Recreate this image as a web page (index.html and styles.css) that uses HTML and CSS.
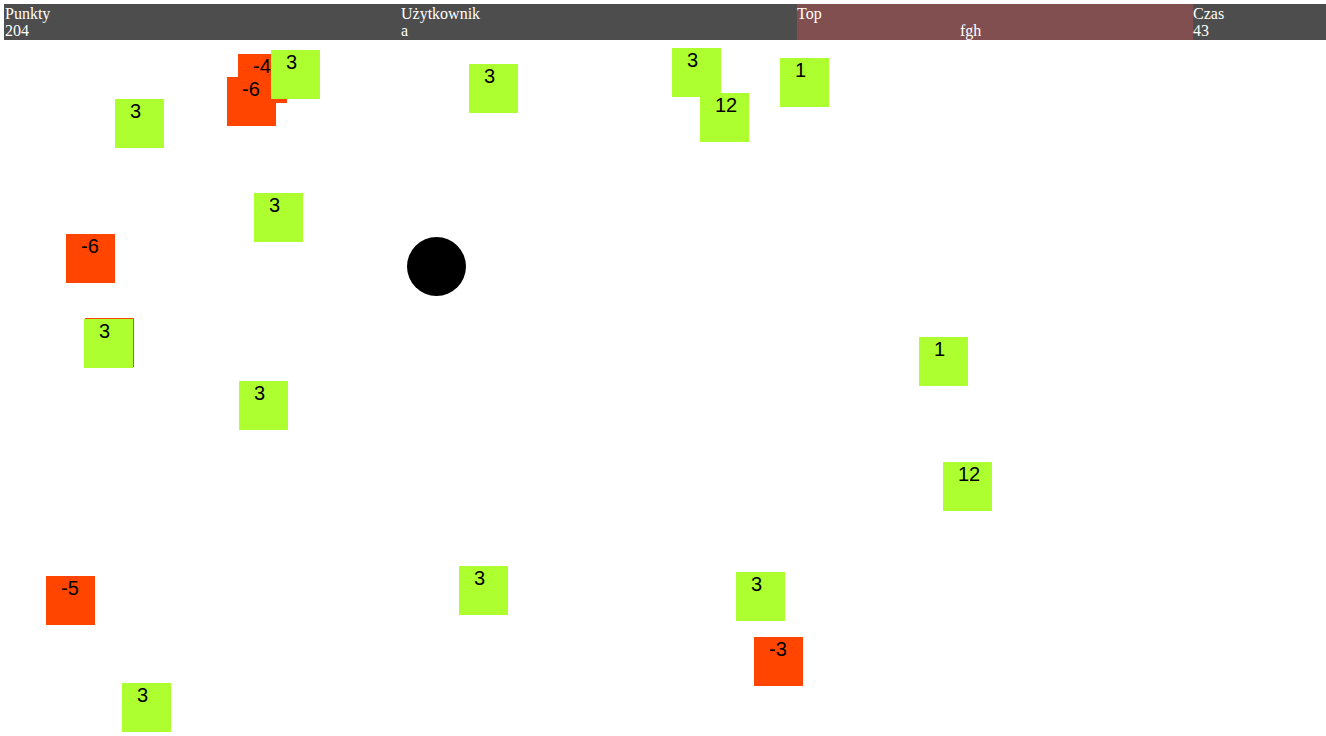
FILE: index.html
```html
<!DOCTYPE html>
<html lang="pl">
<head>
<meta charset="utf-8">
<title>Gra</title>
<link rel="stylesheet" href="styles.css">
</head>
<body>
<div class="hud">
  <div class="col"><div>Punkty</div><div>204</div></div>
  <div class="col"><div>Użytkownik</div><div>a</div></div>
  <div class="col top"><div>Top</div><div class="top-name">fgh</div></div>
  <div class="col"><div>Czas</div><div>43</div></div>
</div>
<div class="field">
  <div class="box bad" style="left:238px;top:54px">-4</div>
  <div class="box bad" style="left:227px;top:77px">-6</div>
  <div class="box good" style="left:271px;top:50px">3</div>
  <div class="box good" style="left:115px;top:99px">3</div>
  <div class="box good" style="left:254px;top:193px">3</div>
  <div class="box bad" style="left:66px;top:234px">-6</div>
  <div class="box bad" style="left:85px;top:318px"></div>
  <div class="box good" style="left:84px;top:319px">3</div>
  <div class="box good" style="left:239px;top:381px">3</div>
  <div class="box good" style="left:469px;top:64px">3</div>
  <div class="box good" style="left:672px;top:48px">3</div>
  <div class="box good" style="left:700px;top:93px">12</div>
  <div class="box good" style="left:780px;top:58px">1</div>
  <div class="box good" style="left:919px;top:337px">1</div>
  <div class="box good" style="left:943px;top:462px">12</div>
  <div class="box bad" style="left:46px;top:576px">-5</div>
  <div class="box good" style="left:459px;top:566px">3</div>
  <div class="box good" style="left:736px;top:572px">3</div>
  <div class="box bad" style="left:754px;top:637px">-3</div>
  <div class="box good" style="left:122px;top:683px">3</div>
  <div class="ball" style="left:407px;top:237px"></div>
</div>
</body>
</html>
```
FILE: styles.css
```css
html, body {
  margin: 0;
  padding: 0;
  width: 1326px;
  height: 736px;
  overflow: hidden;
  background: #ffffff;
}
body {
  position: relative;
  font-family: "Liberation Serif", "Times New Roman", serif;
  font-size: 16px;
}
.hud {
  display: flex;
  margin: 4px 0 0 4px;
  padding: 1px 0 0 1px;
  height: 36px;
  box-sizing: border-box;
  background: #4d4d4d;
  color: #ffffff;
  line-height: 17px;
  overflow: hidden;
}
.col {
  flex: 0 0 396px;
  white-space: nowrap;
  margin-top: -1px;
  padding-top: 1px;
}
.top {
  background: #814f4f;
}
.top-name {
  padding-left: 163px;
}
.field {
  position: absolute;
  left: 0;
  top: 0;
  width: 1326px;
  height: 736px;
  pointer-events: none;
}
.box {
  position: absolute;
  width: 49px;
  height: 49px;
  box-sizing: border-box;
  padding-left: 15px;
  font-family: "Liberation Sans", Arial, sans-serif;
  font-size: 20px;
  line-height: 24px;
  color: #000000;
}
.good {
  background: #adff2f;
}
.bad {
  background: #ff4500;
}
.ball {
  position: absolute;
  width: 59px;
  height: 59px;
  border-radius: 50%;
  background: #000000;
}
```
